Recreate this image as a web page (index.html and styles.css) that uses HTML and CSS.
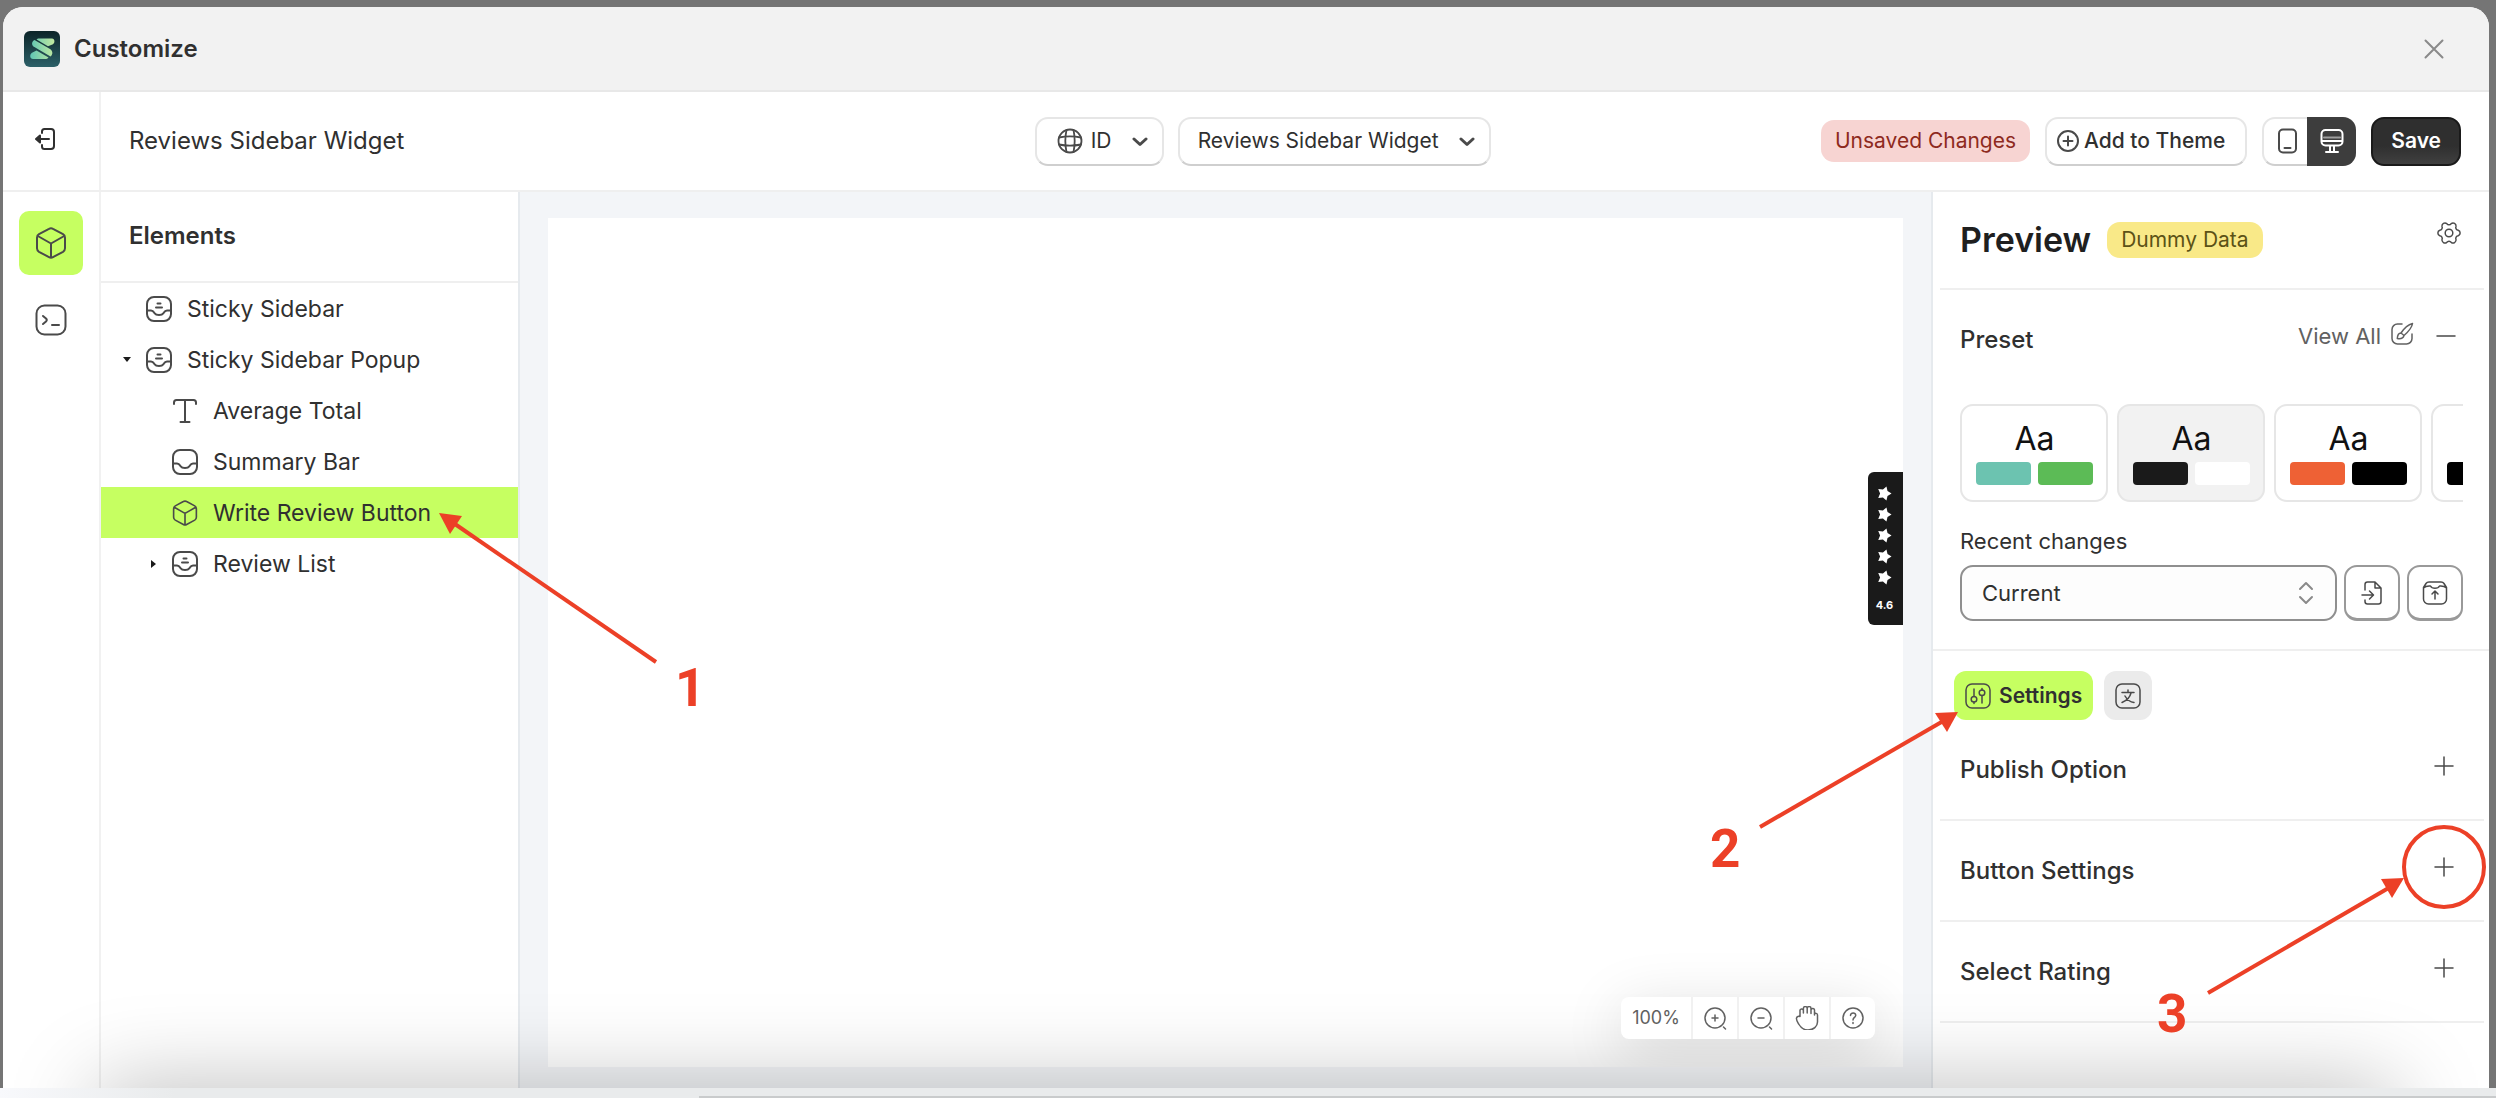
FILE: index.html
```html
<!DOCTYPE html>
<html lang="en">
<head>
  <meta charset="UTF-8" />
  <meta name="viewport" content="width=device-width, initial-scale=1" />
  <title>Customize - Reviews Sidebar Widget</title>
  <link rel="stylesheet" href="styles.css">
</head>
<body>
  <!-- Shared icons -->
  <svg class="sprite" aria-hidden="true">
    <symbol id="i-cube" viewBox="0 0 32 32">
      <path d="M14 1.900a4 4 0 0 1 4 0l10 5.300a4 4 0 0 1 2 3.500v10.600a4 4 0 0 1-2 3.500l-10 5.300a4 4 0 0 1-4 0l-10-5.300a4 4 0 0 1-2-3.500V10.700a4 4 0 0 1 2-3.500zM2.800 9 16 16.500 29.200 9M16 16.500v14" />
    </symbol>
    <symbol id="i-inbox" viewBox="0 0 26 26">
      <rect x="1" y="1" width="24" height="24" rx="7" />
      <path d="M1 14.500h4c2 0 2.500 1 3.500 2.600 1 1.500 2 2 4.500 2s3.500-.5 4.500-2c1-1.600 1.500-2.600 3.500-2.600h4" />
    </symbol>
    <symbol id="i-inbox-full" viewBox="0 0 26 26">
      <use href="#i-inbox" />
      <path d="M11.500 7.500h3M10 11.500h6" />
    </symbol>
    <symbol id="i-chevron" viewBox="0 0 16 10">
      <path d="m2 2 6 5.500L14 2" />
    </symbol>
    <symbol id="i-plus" viewBox="0 0 20 20">
      <path d="M10 1v18M1 10h18" />
    </symbol>
    <symbol id="i-star" viewBox="0 0 16 16">
      <path d="M15.500 8 11.200 10.600 10.100 15.500 6.300 12.200 1.300 12.800 3.300 8 1.300 3.200 6.300 3.800 10.100.5 11.200 5.400z" />
    </symbol>
  </svg>

  <div class="modal">
    <header class="titlebar">
      <svg class="logo" viewBox="0 0 36 36" aria-hidden="true">
        <defs>
          <linearGradient id="logoBg" x1="0" y1="0" x2="0" y2="1">
            <stop offset="0" stop-color="#0c2428" />
            <stop offset="1" stop-color="#2c6068" />
          </linearGradient>
          <linearGradient id="logoFg" gradientUnits="userSpaceOnUse" x1="6" y1="0" x2="30" y2="0">
            <stop offset="0" stop-color="#5fc6b4" />
            <stop offset="1" stop-color="#c0e8a0" />
          </linearGradient>
        </defs>
        <rect width="36" height="36" rx="6" fill="url(#logoBg)" />
        <g fill="url(#logoFg)">
          <path d="M14 7.500h14c3 0 3 4.500 1 5.700l-5 2L12.500 8.500z" />
          <path d="M10.500 9 26 18c3 2 3 5.500.5 7.500L9.500 15.500C7 13.500 8 10 10.500 9z" />
          <path d="m12.500 19.500 12 7c-1 1.200-2 1.500-3.500 1.500H9c-3.500 0-3.500-5-1-6.300z" />
        </g>
      </svg>
      <h1>Customize</h1>
      <button class="icon-btn close" aria-label="Close">
        <svg class="i20" viewBox="0 0 20 20"><path d="m1.500 1.500 17 17M18.500 1.500l-17 17" /></svg>
      </button>
    </header>

    <div class="toolbar">
      <button class="icon-btn exit" aria-label="Exit">
        <svg class="i24" viewBox="0 0 24 24"><path d="M9 6V4.500A2.500 2.500 0 0 1 11.500 2H18a3 3 0 0 1 3 3v14a3 3 0 0 1-3 3h-6.500A2.500 2.500 0 0 1 9 19.500V18M16 12H4" /><path d="M7 8.500 3 12l4 3.500z" fill="#303030" /></svg>
      </button>
      <div class="toolbar-main">
        <p class="widget-name">Reviews Sidebar Widget</p>
        <div class="pickers">
          <div class="picker lang">
            <svg class="globe" viewBox="0 0 26 26" aria-hidden="true"><circle cx="13" cy="13" r="11.500" /><path d="M9.500 2c-1.500 7-1.500 15 0 22M16.500 2c1.500 7 1.500 15 0 22M2 9.500c7-1.500 15-1.500 22 0M2 16.500c7 1.500 15 1.500 22 0" /></svg>
            <select aria-label="Language"><option>ID</option></select>
            <svg class="chev" aria-hidden="true"><use href="#i-chevron" /></svg>
          </div>
          <div class="picker">
            <select aria-label="Widget"><option>Reviews Sidebar Widget</option></select>
            <svg class="chev" aria-hidden="true"><use href="#i-chevron" /></svg>
          </div>
        </div>
        <div class="actions">
          <span class="badge critical">Unsaved Changes</span>
          <button class="btn add">
            <svg class="i24" viewBox="0 0 24 24"><circle cx="12" cy="12" r="10" /><path d="M12 7.500v9M7.500 12h9" /></svg>
            Add to Theme
          </button>
          <div class="device">
            <button aria-label="Mobile">
              <svg viewBox="0 0 26 26"><rect x="5" y="1.500" width="17" height="23" rx="4" /><path d="M10.500 20h6" /></svg>
            </button>
            <button class="on" aria-label="Desktop">
              <svg viewBox="0 0 26 26"><rect x="2.500" y="2" width="21" height="15.500" rx="4" /><path d="M3 13h20M11 18v5M15 18v5M7 24h12" /><path d="M5 9.500h16" stroke-opacity=".5" /></svg>
            </button>
          </div>
          <button class="btn save">Save</button>
        </div>
      </div>
    </div>

    <div class="workspace">
      <nav class="rail">
        <button class="rail-btn active" aria-label="Elements"><svg><use href="#i-cube" /></svg></button>
        <button class="rail-btn" aria-label="Code">
          <svg viewBox="0 0 32 32"><rect x="1.500" y="1.500" width="29" height="29" rx="8" /><path d="m8 12 3 2.500c1 1 1 2 0 3L8 20M17 21h7" /></svg>
        </button>
      </nav>

      <aside class="elements">
        <h2>Elements</h2>
        <ul class="tree">
          <li><svg class="ico"><use href="#i-inbox-full" /></svg>Sticky Sidebar</li>
          <li><span class="caret down"></span><svg class="ico"><use href="#i-inbox-full" /></svg>Sticky Sidebar Popup</li>
          <li class="child"><svg class="ico" viewBox="0 0 26 26"><path d="M2 6V4.500A2.500 2.500 0 0 1 4.500 2h17A2.500 2.500 0 0 1 24 4.500V6M13 2v22M8.500 24h9" /></svg>Average Total</li>
          <li class="child"><svg class="ico"><use href="#i-inbox" /></svg>Summary Bar</li>
          <li class="child selected"><svg class="ico"><use href="#i-cube" /></svg>Write Review Button</li>
          <li class="child"><span class="caret right"></span><svg class="ico"><use href="#i-inbox-full" /></svg>Review List</li>
        </ul>
        <svg class="note note-1" viewBox="0 0 320 230">
          <path class="line" d="m235 157-204-140" />
          <path class="head" d="M18 8 41 11 29 29z" />
          <text x="254" y="201">1</text>
        </svg>
      </aside>

      <main class="stage">
        <div class="canvas">
          <div class="sticky">
            <svg><use href="#i-star" /></svg>
            <svg><use href="#i-star" /></svg>
            <svg><use href="#i-star" /></svg>
            <svg><use href="#i-star" /></svg>
            <svg><use href="#i-star" /></svg>
            <span>4.6</span>
          </div>
          <div class="zoombar">
            <span class="level">100%</span>
            <button aria-label="Zoom in"><svg viewBox="0 0 24 24"><circle cx="12" cy="12" r="10" /><path d="M12 9v6M9 12h6M20.500 21l2 2" /></svg></button>
            <button aria-label="Zoom out"><svg viewBox="0 0 24 24"><circle cx="12" cy="12" r="10" /><path d="M9 12h6M20.500 21l2 2" /></svg></button>
            <button aria-label="Pan"><svg viewBox="0 0 24 24"><path d="M5 10.500V5a1.700 1.700 0 0 1 3.400-.5V2.500a1.700 1.700 0 0 1 3.800 0 1.700 1.700 0 0 1 3.800 0V4a1.700 1.700 0 0 1 3.500.5V8c.5-1 3-1 3 1v7c0 4.500-4 8-9.500 8-4.500 0-7-2-9-5.500C2.500 16 1 14 1.500 12c.3-1.700 2.300-2 3.500-1.500zM8.400 4.500V7M12.200 2.500V7M16 4v3.500M19.500 7v2" /></svg></button>
            <button aria-label="Help"><svg viewBox="0 0 24 24"><circle cx="12" cy="12" r="10" /><path d="M9.500 9.500c0-3.500 5.500-3.200 5.200 0C14.500 11.500 12 11.500 12 14M12 16.500v1" /></svg></button>
          </div>
        </div>
      </main>

      <aside class="panel">
        <div class="panel-head">
          <h2>Preview</h2>
          <span class="badge attention">Dummy Data</span>
          <button class="icon-btn gear" aria-label="Preview settings">
            <svg class="i26" viewBox="0 0 26 26"><path d="M22.200 10.200a3 3 0 0 1 0 5.600A2.600 2.600 0 0 0 20 19.500 3 3 0 0 1 15.200 22.400 2.600 2.600 0 0 0 10.800 22.400 3 3 0 0 1 6 19.500 2.600 2.600 0 0 0 3.800 15.800 3 3 0 0 1 3.800 10.200 2.600 2.600 0 0 0 6 6.500 3 3 0 0 1 10.800 3.600 2.600 2.600 0 0 0 15.200 3.600 3 3 0 0 1 20 6.500 2.600 2.600 0 0 0 22.200 10.200z" /><circle cx="13" cy="13" r="3.800" /></svg>
          </button>
        </div>

        <section class="preset">
          <div class="preset-head">
            <h3>Preset</h3>
            <a href="#">View All
              <svg class="i24" viewBox="0 0 24 24"><path d="M12 2H7.500A5.500 5.500 0 0 0 2 7.500v9A5.500 5.500 0 0 0 7.500 22h9a5.500 5.500 0 0 0 5.500-5.500V12M22.500 1.500c-4 1-8.500 5-11.500 9.500l3 2.500c4-3.500 8-8 8.500-12zM11 11c-3 0-3.500 2-3.700 5.500 3 .5 6-.5 6.700-3" /></svg>
            </a>
            <button class="icon-btn" aria-label="Collapse preset"><svg class="i20" viewBox="0 0 20 20"><path d="M1 10h18" /></svg></button>
          </div>
          <div class="cards">
            <button class="card"><span>Aa</span><i class="teal"></i><i class="green"></i></button>
            <button class="card current"><span>Aa</span><i class="ink"></i><i class="white"></i></button>
            <button class="card"><span>Aa</span><i class="orange"></i><i class="black"></i></button>
            <button class="card" aria-label="More"><span></span><i class="black"></i><i class="white"></i></button>
          </div>
          <label for="recent">Recent changes</label>
          <div class="recent">
            <div class="recent-select">
              <select id="recent"><option>Current</option></select>
              <svg class="updown" viewBox="0 0 16 24" aria-hidden="true"><path d="m2 8 6-6 6 6M2 16l6 6 6-6" /></svg>
            </div>
            <button class="square" aria-label="Import">
              <svg class="i26" viewBox="0 0 26 26"><path d="M6 10V4.500A2.500 2.500 0 0 1 8.500 2H16l6 6v13.500a2.500 2.500 0 0 1-2.500 2.500h-11A2.500 2.500 0 0 1 6 21.500V20M16 2v6h6M3 15h11M10.500 11l4 4-4 4" /></svg>
            </button>
            <button class="square" aria-label="Archive">
              <svg class="i26" viewBox="0 0 26 26"><path d="M1.500 7.500 4 3.500C5 2 6 2 7 2h12c1 0 2 0 3 1.500l2.500 4V19a5 5 0 0 1-5 5h-13a5 5 0 0 1-5-5zM1.500 8C4 5.500 7 6 8.500 6c1.500 3 7.500 3 9 0 1.500 0 4.500-.5 7 2M13 19v-7.500M10 14l3-3 3 3" /></svg>
            </button>
          </div>
        </section>

        <div class="tabs">
          <button class="tab active">
            <svg class="i26" viewBox="0 0 26 26"><rect x="1" y="1" width="24" height="24" rx="6" /><path d="M9 6v7.500M9 19v1.500M17 5.500V7M17 12.500V20" /><circle cx="9" cy="16.300" r="2.800" /><circle cx="17" cy="9.700" r="2.800" /></svg>
            Settings
          </button>
          <button class="tab" aria-label="Translations">
            <svg class="i26" viewBox="0 0 26 26"><rect x="1" y="1" width="24" height="24" rx="6" /><path d="M7 9.500h12M13 9.500V7M16 10c-1 4-4 7.500-9 9.500M10 13c2 3.500 5 6 9 6.500" /></svg>
          </button>
        </div>

        <div class="rows">
          <div class="row"><h3>Publish Option</h3><button class="icon-btn" aria-label="Expand publish option"><svg class="i20"><use href="#i-plus" /></svg></button></div>
          <div class="row"><h3>Button Settings</h3><button class="icon-btn" aria-label="Expand button settings"><svg class="i20"><use href="#i-plus" /></svg></button></div>
          <div class="row"><h3>Select Rating</h3><button class="icon-btn" aria-label="Expand select rating"><svg class="i20"><use href="#i-plus" /></svg></button></div>
        </div>

        <svg class="note note-2" viewBox="0 0 800 370">
          <path class="line" d="m70 137 185-107" />
          <path class="head" d="m268 22-23 1 12 19z" />
          <text x="20" y="177">2</text>
          <circle cx="754" cy="177" r="40" />
          <path class="line" d="m518 303 184-107" />
          <path class="head" d="m714 188-23 1 11 19z" />
          <text x="467" y="342">3</text>
        </svg>
      </aside>
    </div>
  </div>

  <footer class="edge"></footer>
</body>
</html>
```

FILE: styles.css
```css
* {
  box-sizing: border-box;
}

body {
  margin: 0;
  height: 100vh;
  display: flex;
  flex-direction: column;
  overflow: hidden;
  background-color: #757575;
  font-family: Inter, "Liberation Sans", sans-serif;
  font-size: 22px;
  line-height: 28px;
  color: #303030;
}

h1, h2, h3, p, ul {
  margin: 0;
  padding: 0;
}

button, select {
  font: inherit;
  color: inherit;
  margin: 0;
  padding: 0;
  border: none;
  background: none;
  cursor: pointer;
}

svg {
  display: block;
  flex: none;
  fill: none;
  stroke: #4a4a4a;
  stroke-width: 2;
  stroke-linecap: round;
  stroke-linejoin: round;
}

.sprite {
  position: absolute;
  width: 0;
  height: 0;
}

.i20 {
  width: 20px;
  height: 20px;
}

.i24 {
  width: 24px;
  height: 24px;
}

.i26 {
  width: 26px;
  height: 26px;
}

.icon-btn {
  display: flex;
  align-items: center;
  justify-content: center;
}

.icon-btn svg {
  stroke-width: 1.5;
}

.modal {
  position: relative;
  flex: 1;
  min-height: 0;
  display: flex;
  flex-direction: column;
  margin: 7px 7px 0 3px;
  border-radius: 20px 20px 0 0;
  background-color: #fff;
  overflow: hidden;
}

/* Soft shade rising from the bottom edge */
.modal::after {
  content: "";
  position: absolute;
  left: 95px;
  right: 95px;
  top: 100%;
  height: 80px;
  box-shadow: 0 0 90px rgba(0, 0, 0, 0.28);
  pointer-events: none;
  z-index: 1;
}

/* Title bar */
.titlebar {
  display: flex;
  align-items: center;
  gap: 14px;
  height: 85px;
  padding: 0 45px 0 21px;
  background-color: #f2f2f2;
  border-bottom: 2px solid #e8e8e8;
}

.titlebar h1 {
  flex: 1;
  font-size: 24px;
  font-weight: 600;
}

.logo {
  width: 36px;
  height: 36px;
  stroke: none;
}

.close svg {
  stroke: #8a8a8a;
  stroke-width: 2;
}

/* Toolbar */
.toolbar {
  display: flex;
  height: 100px;
  border-bottom: 2px solid #efefef;
}

.exit {
  width: 98px;
  border-right: 2px solid #f1f1f1;
  padding: 0 12px 4px 0;
}

.exit svg {
  stroke: #303030;
  stroke-width: 2;
}

.toolbar-main {
  flex: 1;
  display: flex;
  align-items: center;
  padding: 0 28px;
  font-size: 21px;
}

.widget-name {
  flex: 14 0 0;
  font-size: 24px;
}

.pickers {
  display: flex;
  gap: 14px;
}

.picker {
  position: relative;
}

.picker select {
  appearance: none;
  height: 49px;
  padding: 0 50px 0 18px;
  border: 2px solid #e6e6e6;
  border-bottom-color: #cfcfcf;
  border-radius: 13px;
  background-color: #fff;
}

.picker.lang select {
  padding: 0 50px 0 54px;
}

.globe {
  position: absolute;
  left: 22px;
  top: 11px;
  width: 26px;
  height: 26px;
  stroke-width: 1.8;
}

.chev {
  position: absolute;
  right: 16px;
  top: 20px;
  width: 16px;
  height: 10px;
  stroke-width: 3;
}

.actions {
  flex: 15 0 0;
  display: flex;
  align-items: center;
  justify-content: flex-end;
  gap: 15px;
}

.badge {
  padding: 4px 14px;
  border-radius: 13px;
  font-size: 21px;
}

.critical {
  padding: 7px 14px;
  background-color: #f7d4d2;
  color: #8e2a1e;
}

.attention {
  background-color: #f9e988;
  color: #5c5216;
}

.btn {
  display: flex;
  align-items: center;
  gap: 4px;
  height: 49px;
  border-radius: 13px;
  font-weight: 500;
}

.add {
  padding: 0 20px 0 9px;
  border: 2px solid #e6e6e6;
  border-bottom-color: #cfcfcf;
}

.save {
  padding: 0 18px;
  color: #fff;
  font-weight: 600;
  background-image: linear-gradient(#2f2f2f 60%, #404040);
  border: 2px solid #1a1a1a;
}

.device {
  display: flex;
  border: 2px solid #e6e6e6;
  border-bottom-color: #cfcfcf;
  border-radius: 13px;
  height: 49px;
}

.device button {
  display: flex;
  align-items: center;
  justify-content: center;
  width: 45px;
}

.device svg {
  width: 26px;
  height: 26px;
}

.device .on {
  width: 49px;
  margin: -2px;
  background-color: #3d3d3d;
  border-radius: 0 13px 13px 0;
}

.device .on svg {
  stroke: #fff;
}

/* Workspace */
.workspace {
  flex: 1;
  min-height: 0;
  display: flex;
}

.rail {
  display: flex;
  flex-direction: column;
  align-items: center;
  gap: 13px;
  width: 98px;
  padding: 19px 0;
  border-right: 2px solid #f1f1f1;
}

.rail-btn {
  display: flex;
  align-items: center;
  justify-content: center;
  width: 64px;
  height: 64px;
  border-radius: 10px;
}

.rail-btn svg {
  width: 32px;
  height: 32px;
}

.active {
  background-color: #c6ff61;
}

.elements {
  position: relative;
  width: 419px;
  border-right: 2px solid #e6eaee;
}

.elements h2 {
  height: 91px;
  padding: 30px 28px;
  font-size: 24px;
  font-weight: 600;
  border-bottom: 2px solid #efefef;
}

.tree {
  list-style: none;
  font-size: 23px;
}

.tree li {
  position: relative;
  display: flex;
  align-items: center;
  gap: 15px;
  height: 51px;
  padding-left: 45px;
}

.tree .child {
  padding-left: 71px;
}

.tree .selected {
  background-color: #c6ff61;
}

.ico {
  width: 26px;
  height: 26px;
}

.caret {
  position: absolute;
  left: 22px;
  border: 4px solid transparent;
}

.caret.down {
  border-width: 5px 4px 0;
  border-top-color: #1a1a1a;
}

.caret.right {
  left: 50px;
  border-width: 4px 0 4px 5px;
  border-left-color: #1a1a1a;
}

.stage {
  flex: 1;
  padding: 26px 28px 21px;
  background-color: #f3f5f8;
}

.canvas {
  position: relative;
  height: 100%;
  background-color: #fff;
  overflow: hidden;
}

.sticky {
  position: absolute;
  right: 0;
  top: 254px;
  display: flex;
  flex-direction: column;
  align-items: center;
  gap: 6px;
  width: 35px;
  padding: 14px 2px 6px 0;
  border-radius: 6px 0 0 6px;
  background-color: #1a1a1a;
  color: #fff;
  font-size: 11px;
  font-weight: 700;
}

.sticky svg {
  width: 15px;
  height: 15px;
  fill: #fff;
  stroke: none;
}

.zoombar {
  position: absolute;
  right: 28px;
  bottom: 28px;
  display: flex;
  border-radius: 8px;
  background-color: #fff;
  box-shadow: 0 12px 60px rgba(0, 0, 0, 0.15);
  z-index: 3;
}

.level,
.zoombar button {
  display: flex;
  align-items: center;
  justify-content: center;
  width: 46px;
  height: 42px;
  border-left: 2px solid #f1f1f1;
}

.zoombar .level {
  width: 70px;
  border-left: none;
  font-size: 18px;
  color: #616161;
}

.zoombar svg {
  width: 24px;
  height: 24px;
  stroke: #616161;
  stroke-width: 1.5;
}

/* Right panel */
.panel {
  position: relative;
  width: 558px;
  border-left: 2px solid #e6eaee;
}

.panel-head {
  display: flex;
  align-items: center;
  gap: 16px;
  height: 98px;
  margin: 0 5px 0 7px;
  padding: 0 20px;
  border-bottom: 2px solid #efefef;
}

.panel-head h2 {
  font-size: 34px;
  font-weight: 600;
  color: #1f1f1f;
}

.gear {
  margin: 0 2px 14px auto;
}

.preset {
  padding: 32px 26px 28px 27px;
  border-bottom: 2px solid #efefef;
}

.preset-head {
  display: flex;
  align-items: center;
  gap: 22px;
  height: 35px;
  margin-bottom: 47px;
}

.preset-head a {
  display: flex;
  gap: 9px;
  margin: 0 0 7px auto;
  color: #616161;
  text-decoration: none;
}

.preset-head a svg {
  stroke: #616161;
  stroke-width: 1.5;
}

.preset-head .icon-btn {
  margin: 0 7px 7px 0;
}

h3 {
  font-size: 24px;
  font-weight: 500;
}

.cards {
  display: flex;
  gap: 9px;
  overflow: hidden;
}

.card {
  flex: none;
  display: grid;
  grid-template-columns: 55px 55px;
  gap: 7px;
  width: 148px;
  height: 98px;
  padding: 15px 14px;
  border: 2px solid #e6e6e6;
  border-radius: 13px;
}

.card span {
  grid-column: span 2;
  height: 34px;
  font-size: 32px;
  line-height: 36px;
  color: #111;
}

.card i {
  height: 23px;
  border-radius: 4px;
}

.card.current {
  background-color: #f2f2f2;
}

.teal {
  background-color: #6cc3b0;
}

.green {
  background-color: #5cbb56;
}

.ink {
  background-color: #1a1a1a;
}

.white {
  background-color: #fff;
}

.orange {
  background-color: #ee6135;
}

.black {
  background-color: #000;
}

.preset label {
  display: block;
  margin: 25px 0 10px;
}

.recent {
  display: flex;
  gap: 7px;
}

.recent-select {
  position: relative;
  flex: 1;
}

.recent select {
  appearance: none;
  width: 100%;
  height: 56px;
  padding: 0 20px;
  border: 2px solid #8f8f8f;
  border-radius: 13px;
  background-color: #fdfdfd;
}

.updown {
  position: absolute;
  right: 23px;
  top: 16px;
  width: 16px;
  height: 24px;
  stroke: #8a8a8a;
}

.square {
  display: flex;
  align-items: center;
  justify-content: center;
  width: 56px;
  height: 56px;
  border: 2px solid #999;
  border-bottom-width: 3px;
  border-radius: 13px;
}

.square svg {
  stroke-width: 1.5;
}

.tabs {
  display: flex;
  gap: 11px;
  padding: 20px 21px 0;
}

.tab {
  display: flex;
  align-items: center;
  gap: 8px;
  height: 49px;
  padding: 0 11px;
  border-radius: 12px;
  background-color: #ebebeb;
  font-size: 21px;
  font-weight: 600;
}

.tab svg {
  stroke-width: 1.5;
}

.tab.active {
  background-color: #c6ff61;
}

.rows {
  margin: 0 5px 0 7px;
}

.row {
  display: flex;
  align-items: center;
  justify-content: space-between;
  height: 101px;
  padding: 0 30px 0 20px;
  border-bottom: 2px solid #efefef;
}

.row .icon-btn {
  margin-bottom: 8px;
}

/* Red callouts drawn over the panels */
.note {
  position: absolute;
  z-index: 2;
  pointer-events: none;
}

.note-1 {
  left: 320px;
  top: 313px;
  width: 320px;
  height: 230px;
}

.note-2 {
  right: -1px;
  top: 498px;
  width: 800px;
  height: 370px;
}

.note .line,
.note circle {
  stroke: #ec4027;
  stroke-width: 4;
  stroke-linecap: butt;
}

.note .head {
  fill: #ec4027;
  stroke: none;
}

.note text {
  fill: #ec4027;
  stroke: none;
  font-family: Roboto, "Liberation Sans", sans-serif;
  font-size: 53px;
  font-weight: 700;
}

/* Strip under the modal */
.edge {
  position: relative;
  height: 10px;
  background-image: linear-gradient(90deg, #f8f9fc, #e9ebec 7%);
}

.edge::after {
  content: "";
  position: absolute;
  left: 28%;
  right: 0;
  bottom: 0;
  height: 2px;
  background-color: #c9cbcc;
}
```
